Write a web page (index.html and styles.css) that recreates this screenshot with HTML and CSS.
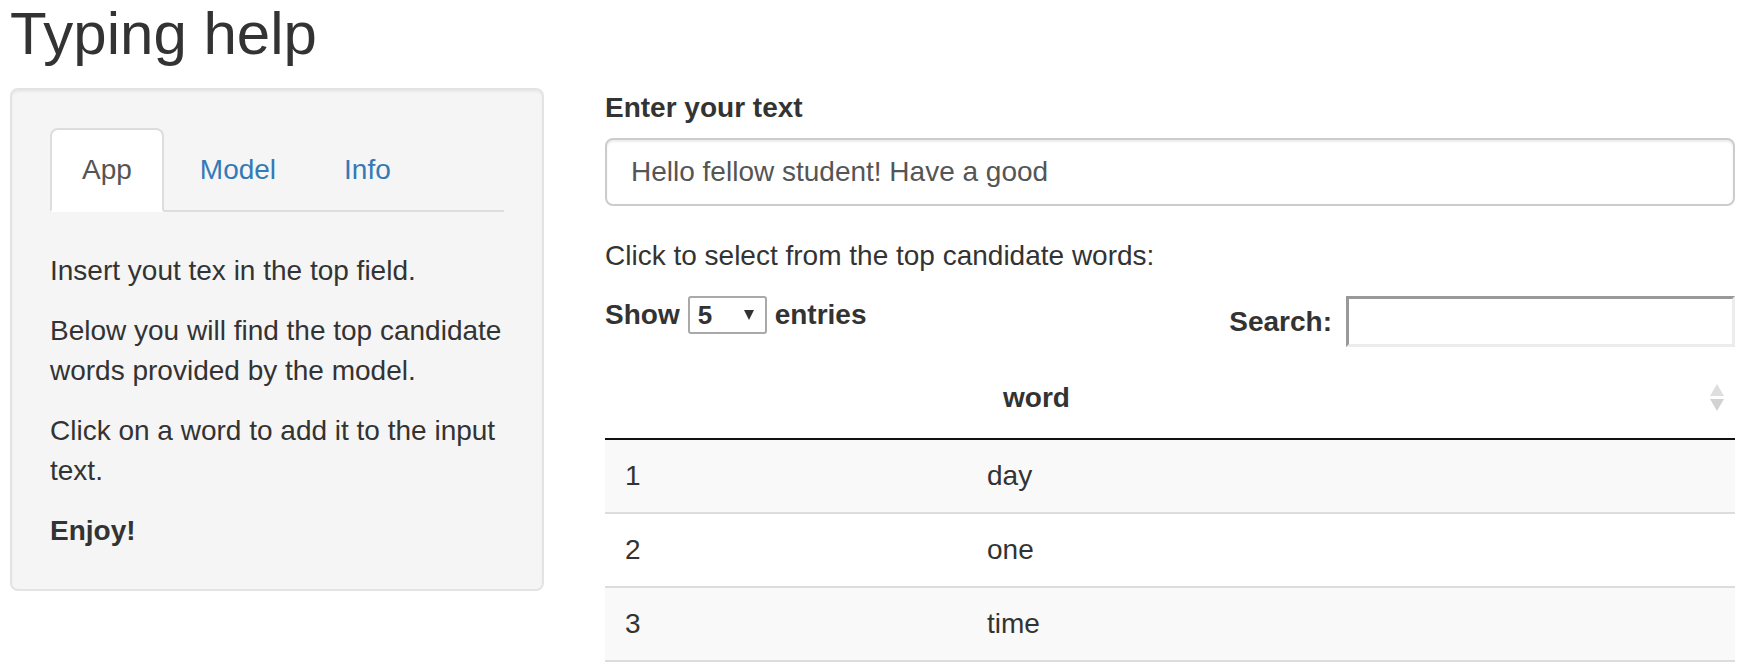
FILE: index.html
```html
<!DOCTYPE html>
<html lang="en">
<head>
<meta charset="utf-8">
<title>Typing help</title>
<link rel="stylesheet" href="styles.css">
</head>
<body>
<div class="page">
  <h2 class="title">Typing help</h2>
  <div class="row">
    <div class="side">
      <div class="well">
        <ul class="tabs">
          <li class="tab active"><a href="#">App</a></li>
          <li class="tab"><a href="#">Model</a></li>
          <li class="tab"><a href="#">Info</a></li>
        </ul>
        <div class="tab-content">
          <p>Insert yout tex in the top field.</p>
          <p>Below you will find the top candidate words provided by the model.</p>
          <p>Click on a word to add it to the input text.</p>
          <p class="last"><strong>Enjoy!</strong></p>
        </div>
      </div>
    </div>
    <div class="main">
      <label class="field-label" for="txt">Enter your text</label>
      <input class="text-input" id="txt" type="text" value="Hello fellow student! Have a good">
      <div class="hint">Click to select from the top candidate words:</div>
      <div class="dt-controls">
        <div class="dt-length">
          <span>Show</span>
          <span class="sel"><span class="sel-val">5</span><svg class="sel-caret" width="10" height="11" viewBox="0 0 10 11"><polygon points="0,0 10,0 5,10" fill="#333"/></svg></span>
          <span>entries</span>
        </div>
        <div class="dt-filter">
          <span>Search:</span>
          <input class="search-input" type="search" value="">
        </div>
      </div>
      <table class="dt">
        <colgroup><col class="c-idx"><col></colgroup>
        <thead>
          <tr>
            <th></th>
            <th><div class="th-inner"><span>word</span><svg class="sort-icon" width="16" height="28" viewBox="0 0 16 28"><polygon points="8,0 15,12 1,12" fill="#dedede"/><polygon points="1,15 15,15 8,27" fill="#d2d2d2"/></svg></div></th>
          </tr>
        </thead>
        <tbody>
          <tr class="odd"><td>1</td><td>day</td></tr>
          <tr class="even"><td>2</td><td>one</td></tr>
          <tr class="odd"><td>3</td><td>time</td></tr>
        </tbody>
      </table>
    </div>
  </div>
</div>
</body>
</html>
```
FILE: styles.css
```css
* { box-sizing: border-box; }
html, body { margin: 0; padding: 0; background: #fff; }
body {
  font-family: "Liberation Sans", Arial, Helvetica, sans-serif;
  font-size: 28px;
  line-height: 40px;
  color: #333;
}
.page { padding: 1px 9px 0 10px; }
.title {
  margin: 0 0 21px;
  font-size: 60px;
  line-height: 66px;
  font-weight: normal;
}
.row { display: flex; gap: 61px; align-items: flex-start; }
.side { width: 534px; flex: none; }
.main { flex: 1; min-width: 0; }

.well {
  background: #f5f5f5;
  border: 2px solid #e3e3e3;
  border-radius: 8px;
  padding: 38px;
  box-shadow: inset 0 2px 2px rgba(0,0,0,.05);
}
.tabs {
  display: flex;
  list-style: none;
  margin: 0;
  padding: 0;
  border-bottom: 2px solid #ddd;
}
.tab { margin: 0 4px -2px 0; }
.tab a {
  display: block;
  padding: 20px 30px;
  border: 2px solid transparent;
  border-radius: 8px 8px 0 0;
  color: #337ab7;
  text-decoration: none;
  line-height: 40px;
}
.tab.active a {
  color: #555;
  background: #fff;
  border-color: #ddd #ddd transparent;
}
.tab-content { padding-top: 39px; }
.tab-content p { margin: 0 0 20px; }
.tab-content p.last { margin-bottom: 0; }

.field-label { display: block; font-weight: bold; margin-bottom: 10px; }
.text-input {
  display: block;
  width: 100%;
  height: 68px;
  margin: 0 0 30px;
  padding: 12px 24px;
  border: 2px solid #ccc;
  border-radius: 8px;
  font: 28px/40px "Liberation Sans", Arial, sans-serif;
  color: #555;
  background: #fff;
  box-shadow: inset 0 2px 2px rgba(0,0,0,.075);
  outline: none;
}
.hint { margin: 0; }

.dt-controls {
  display: flex;
  justify-content: space-between;
  align-items: flex-start;
  margin-top: 20px;
}
.dt-length {
  display: flex;
  align-items: center;
  gap: 8px;
  height: 38px;
  font-weight: bold;
}
.sel {
  display: flex;
  align-items: center;
  justify-content: space-between;
  width: 79px;
  height: 38px;
  padding: 0 11px 0 8px;
  border: 2px solid #a9a9a9;
  border-radius: 3px;
  background: #fff;
  font-size: 26px;
  line-height: 30px;
}
.sel-caret { display: block; }
.dt-filter {
  display: flex;
  align-items: center;
  font-weight: bold;
}
.search-input {
  margin: 0 0 0 14px;
  width: 389px;
  height: 51px;
  padding: 2px 4px;
  border-style: solid;
  border-width: 3px;
  border-color: #999 #ececec #ececec #999;
  background: #fff;
  font: 28px "Liberation Sans", Arial, sans-serif;
  outline: none;
}

.dt {
  margin-top: 11px;
  width: 100%;
  border-collapse: separate;
  border-spacing: 0;
  table-layout: fixed;
}
.dt col.c-idx { width: 362px; }
.dt th {
  padding: 20px 10px 20px 36px;
  border-bottom: 2px solid #111;
  text-align: left;
  font-weight: bold;
}
.th-inner { display: flex; justify-content: space-between; align-items: center; }
.sort-icon { display: block; }
.dt td { padding: 16px 20px; border-top: 2px solid #ddd; }
.dt tbody tr:first-child td { border-top: none; }
.dt tbody tr:last-child td { border-bottom: 2px solid #ddd; }
.dt tbody tr.odd { background: #f9f9f9; }
```
